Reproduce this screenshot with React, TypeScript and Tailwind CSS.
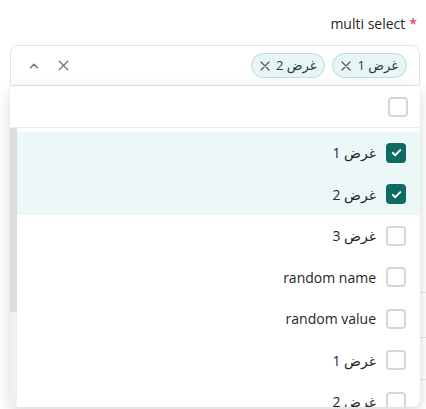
const options = [
  { label: 'غرض 1', checked: true },
  { label: 'غرض 2', checked: true },
  { label: 'غرض 3', checked: false },
  { label: 'random name', checked: false },
  { label: 'random value', checked: false },
  { label: 'غرض 1', checked: false },
  { label: 'غرض 2', checked: false },
  { label: 'غرض 3', checked: false },
];

const selected = ['غرض 1', 'غرض 2'];

function XIcon({ className }: { className?: string }) {
  return (
    <svg className={className} viewBox="0 0 24 24" fill="none" stroke="currentColor" strokeWidth="1.8" strokeLinecap="round">
      <path d="M18 6 6 18M6 6l12 12" />
    </svg>
  );
}

function Checkbox({ checked }: { checked: boolean }) {
  if (checked) {
    return (
      <div className="w-5 h-5 rounded-[4px] bg-[#0d6b63] flex items-center justify-center shrink-0">
        <svg className="w-[13px] h-[13px] text-white" viewBox="0 0 24 24" fill="none" stroke="currentColor" strokeWidth="3.5" strokeLinecap="round" strokeLinejoin="round">
          <path d="M5 12.5l4.5 4.5L19 7.5" />
        </svg>
      </div>
    );
  }
  return <div className="w-5 h-5 rounded-[4px] border-2 border-[#d5d7dc] bg-white shrink-0" />;
}

export default function App() {
  return (
    <div className="relative h-[409px] overflow-hidden bg-white text-[#262626]" style={{ fontFamily: '"Open Sans", "DejaVu Sans", sans-serif' }}>
      {/* field label */}
      <div className="flex justify-end pt-[14px] pr-[9px] mb-[11px] text-[14px] leading-5">
        <span>multi select</span>
        <span className="text-[#e0245e] ml-[4px]">*</span>
      </div>

      <div dir="rtl" className="relative ml-[10px] mr-[6px]">
        {/* selected values */}
        <div className="h-[41px] flex items-center justify-between border border-[#e3e4e8] rounded-t-[8px] pr-[12px] pl-[16px]">
          <div className="flex items-center gap-[7px]">
            {selected.map((s) => (
              <div key={s} className="h-[25px] flex items-center gap-[3px] rounded-full border border-[#b9ddd9] bg-[#e7f5f4] pr-[8px] pl-[5px] text-[13px] text-[#1e3f3c]">
                <span>{s}</span>
                <XIcon className="w-[16px] h-[16px] text-[#555]" />
              </div>
            ))}
          </div>
          <div className="flex items-center gap-[14px] text-[#6b7280]">
            <XIcon className="w-[17px] h-[17px]" />
            <svg className="w-[14px] h-[14px]" viewBox="0 0 24 24" fill="none" stroke="currentColor" strokeWidth="2.5" strokeLinecap="round" strokeLinejoin="round">
              <path d="M6 15l6-6 6 6" />
            </svg>
          </div>
        </div>

        {/* options menu */}
        <div className="absolute top-full left-0 right-0 z-10 bg-white rounded-b-[8px] shadow-[0_4px_14px_rgba(0,0,0,0.16)] overflow-hidden">
          <div className="h-[42px] flex items-center pr-[12px] border-b border-[#ebebeb]">
            <Checkbox checked={false} />
          </div>
          <div className="h-[279px] flex">
            <div className="flex-1 overflow-hidden pt-1">
              {options.map((o, i) => (
                <div key={i} className={`h-[41.5px] flex items-center gap-[10px] pr-[14px] text-[14px] ${o.checked ? 'bg-[#ecf8f8]' : ''}`}>
                  <Checkbox checked={o.checked} />
                  <span>{o.label}</span>
                </div>
              ))}
            </div>
            {/* scrollbar */}
            <div className="w-[7px] bg-[#f0f0f0]">
              <div className="h-[184px] bg-[#dcdcdc]" />
            </div>
          </div>
        </div>
      </div>

      {/* page content under the menu */}
      <div className="mt-[166px] ml-auto w-[12px]">
        <div className="h-[41px] border-b border-[#e5e7eb]" />
        <div className="h-[45px] border-b border-[#e5e7eb]" />
        <div className="h-[42px] border-b border-[#e5e7eb]" />
      </div>
    </div>
  );
}
